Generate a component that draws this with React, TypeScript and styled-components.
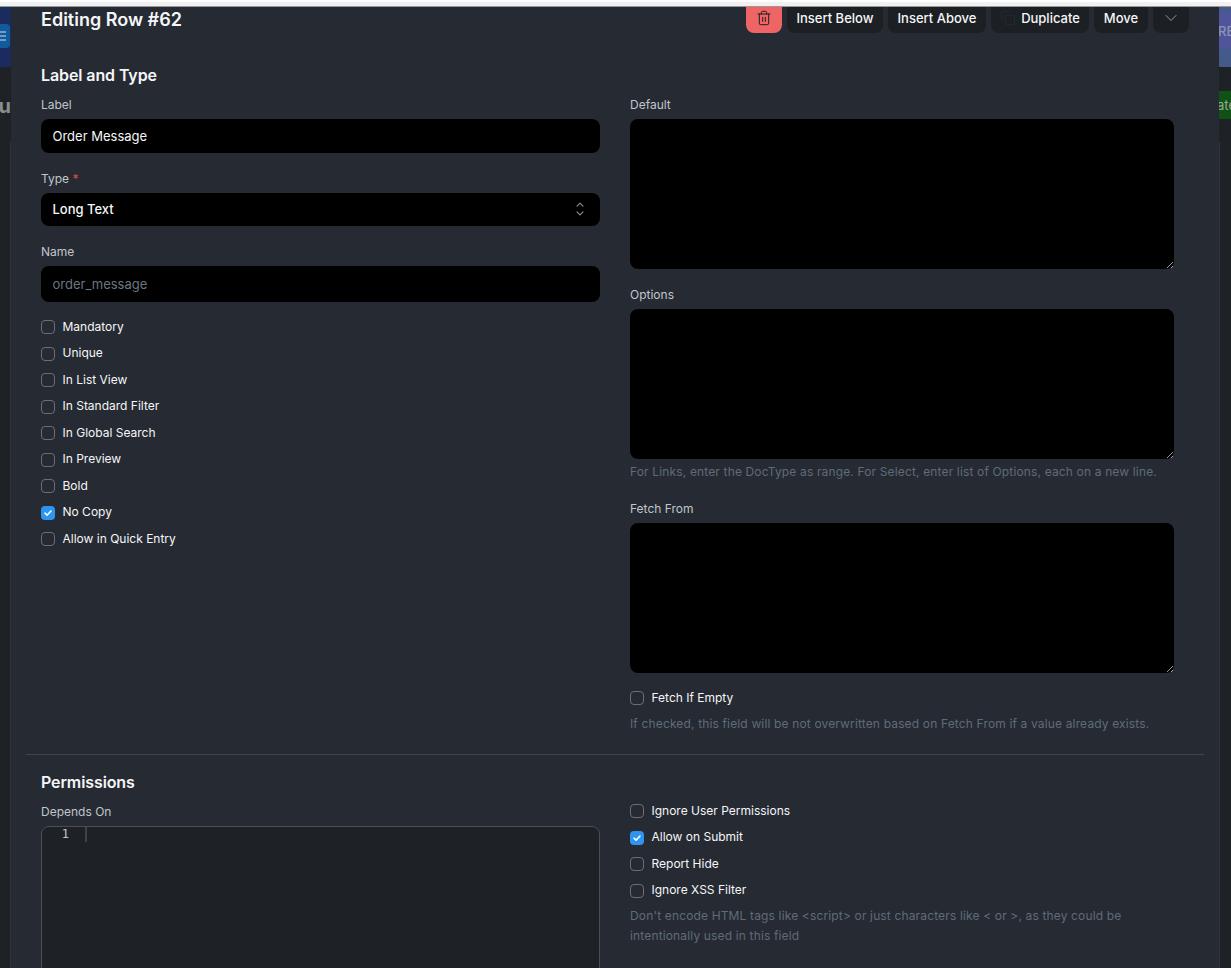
import styled, { createGlobalStyle } from 'styled-components';
import { Copy, ChevronDown, Trash2 } from 'lucide-react';

const GlobalStyle = createGlobalStyle`
  html, body {
    margin: 0;
    background: #1e2226;
  }
  * {
    box-sizing: border-box;
  }
`;

const leftChecks = [
  { label: 'Mandatory' },
  { label: 'Unique' },
  { label: 'In List View' },
  { label: 'In Standard Filter' },
  { label: 'In Global Search' },
  { label: 'In Preview' },
  { label: 'Bold' },
  { label: 'No Copy', checked: true },
  { label: 'Allow in Quick Entry' },
];

const rightChecks = [
  { label: 'Ignore User Permissions' },
  { label: 'Allow on Submit', checked: true },
  { label: 'Report Hide' },
  { label: 'Ignore XSS Filter' },
];

const CheckRow = ({ label, checked }: { label: string; checked?: boolean }) => (
  <Row>
    <Box $checked={checked}>
      {checked && (
        <svg width="10" height="10" viewBox="0 0 10 10" fill="none">
          <path d="M2 5.2 4.1 7.2 8 3" stroke="#fff" strokeWidth="1.6" strokeLinecap="round" strokeLinejoin="round" />
        </svg>
      )}
    </Box>
    <RowLabel>{label}</RowLabel>
  </Row>
);

const App = () => {
  return (
    <Page>
      <GlobalStyle />
      <TopStrip />
      <Stage>
        <LeftSliver>
          <LeftNav>
            <MenuButton>
              <svg width="10" height="12" viewBox="0 0 10 12" fill="none">
                <path d="M0 2h6M0 6h6M0 10h6" stroke="#8fb4d6" strokeWidth="1.6" />
              </svg>
            </MenuButton>
          </LeftNav>
          <LeftTitle>u</LeftTitle>
          <EdgeLine $side="right" />
        </LeftSliver>

        <Modal>
          <Header>
            <Title>Editing Row #62</Title>
            <Actions>
              <DangerButton>
                <Trash2 size={16} strokeWidth={1.5} color="#1c2024" />
              </DangerButton>
              <ActionButton $width={96}>Insert Below</ActionButton>
              <ActionButton $width={98}>Insert Above</ActionButton>
              <ActionButton $width={98}>
                <Copy size={16} strokeWidth={1.5} color="#1f2c34" />
                Duplicate
              </ActionButton>
              <ActionButton $width={54}>Move</ActionButton>
              <ActionButton $width={36}>
                <ChevronDown size={20} strokeWidth={1.1} color="#a0a5ab" />
              </ActionButton>
            </Actions>
          </Header>

          <Section>
            <Column>
              <Heading>Label and Type</Heading>
              <Field>
                <Label>Label</Label>
                <TextInput $height={34} value="Order Message" readOnly />
              </Field>
              <Field>
                <Label>
                  Type <Required>*</Required>
                </Label>
                <SelectBox>
                  Long Text
                  <Stepper width="10" height="16" viewBox="0 0 10 16" fill="none">
                    <path d="M2 5.2 5 2.2l3 3M2 10.8l3 3 3-3" stroke="#8a9097" strokeWidth="1.1" strokeLinecap="round" strokeLinejoin="round" />
                  </Stepper>
                </SelectBox>
              </Field>
              <Field>
                <Label>Name</Label>
                <TextInput $height={36} $muted value="order_message" readOnly />
              </Field>
              <Checks $top={-5}>
                {leftChecks.map((c) => (
                  <CheckRow key={c.label} {...c} />
                ))}
              </Checks>
            </Column>

            <Column $top={31}>
              <Field>
                <Label>Default</Label>
                <Area readOnly />
              </Field>
              <Field $bottom={20}>
                <Label>Options</Label>
                <Area readOnly />
                <Help>For Links, enter the DocType as range. For Select, enter list of Options, each on a new line.</Help>
              </Field>
              <Field>
                <Label>Fetch From</Label>
                <Area readOnly />
              </Field>
              <Checks $top={-5}>
                <CheckRow label="Fetch If Empty" />
              </Checks>
              <Help $top={4}>If checked, this field will be not overwritten based on Fetch From if a value already exists.</Help>
            </Column>
          </Section>

          <Divider />

          <Section $top={17}>
            <Column>
              <Heading>Permissions</Heading>
              <Field>
                <Label>Depends On</Label>
                <Editor>
                  <Gutter>
                    <LineNumber>1</LineNumber>
                  </Gutter>
                  <Caret />
                </Editor>
              </Field>
            </Column>
            <Column $top={26.5}>
              <Checks>
                {rightChecks.map((c) => (
                  <CheckRow key={c.label} {...c} />
                ))}
              </Checks>
              <Help $top={1.5} $lineHeight={20}>
                Don't encode HTML tags like &lt;script&gt; or just characters like &lt; or &gt;, as they could be
                intentionally used in this field
              </Help>
            </Column>
          </Section>
        </Modal>

        <RightSliver>
          <RightNav>
            <NavBand>RE</NavBand>
          </RightNav>
          <GreenBadge>ate</GreenBadge>
          <EdgeLine $side="left" />
        </RightSliver>
      </Stage>
    </Page>
  );
};

export default App;

const Page = styled.div`
  display: flex;
  flex-direction: column;
  width: 1231px;
  height: 968px;
  overflow: hidden;
  font-family: Inter, 'Liberation Sans', sans-serif;
  color: #f5f6f7;
`;

const TopStrip = styled.div`
  height: 7px;
  flex: none;
  background: #f1f1f1;
  border-top: 2px solid #fff;
  border-bottom: 1px solid #9a9a9a;
`;

const Stage = styled.div`
  display: flex;
  flex: 1;
  min-height: 0;
`;

const LeftSliver = styled.div`
  position: relative;
  width: 11px;
  flex: none;
  overflow: hidden;
  background: #1e2226;
`;

const LeftNav = styled.div`
  display: flex;
  align-items: center;
  height: 60px;
  background: #1c2b5e;
`;

const MenuButton = styled.div`
  display: flex;
  align-items: center;
  width: 10px;
  height: 24px;
  margin-top: -2px;
  background: #115a9c;
  border-radius: 0 4px 4px 0;
`;

const LeftTitle = styled.div`
  display: flex;
  justify-content: flex-end;
  margin-top: 27px;
  font-size: 20px;
  font-weight: 700;
  line-height: 24px;
  color: #8a8d91;
`;

const EdgeLine = styled.div<{ $side: 'left' | 'right' }>`
  position: absolute;
  top: 135px;
  bottom: 0;
  ${(p) => p.$side}: 0;
  width: 1px;
  background: #30343a;
`;

const RightSliver = styled.div`
  position: relative;
  width: 12px;
  flex: none;
  overflow: hidden;
  background: #1e2226;
`;

const RightNav = styled.div`
  display: flex;
  align-items: center;
  height: 60px;
  background: #445a8a;
`;

const NavBand = styled.div`
  display: flex;
  align-items: center;
  width: 100%;
  height: 36px;
  margin-top: -12px;
  text-indent: -1px;
  background: #50549a;
  font-size: 13px;
  font-weight: 500;
  color: #8f93b5;
  white-space: nowrap;
`;

const GreenBadge = styled.div`
  height: 28px;
  margin-top: 24px;
  text-indent: -2px;
  background: #0f5214;
  font-size: 13px;
  line-height: 28px;
  color: #9aa59a;
  white-space: nowrap;
`;

const Modal = styled.div`
  flex: 1;
  min-width: 0;
  background: #262a32;
`;

const Header = styled.div`
  display: flex;
  align-items: center;
  justify-content: space-between;
  height: 26px;
  padding: 0 30px;
`;

const Title = styled.h1`
  margin: 0;
  font-size: 18px;
  font-weight: 600;
  line-height: 26px;
`;

const Actions = styled.div`
  display: flex;
  gap: 5px;
`;

const ActionButton = styled.div<{ $width: number }>`
  display: flex;
  align-items: center;
  justify-content: center;
  gap: 5px;
  width: ${(p) => p.$width}px;
  height: 26px;
  padding-bottom: 4px;
  background: #1c2024;
  border-radius: 0 0 8px 8px;
  font-size: 13px;
  font-weight: 500;
`;

const DangerButton = styled(ActionButton).attrs({ $width: 36 })`
  background: #ef6464;
`;

const Section = styled.div<{ $top?: number }>`
  display: grid;
  grid-template-columns: 559px 544px;
  column-gap: 30px;
  padding: ${(p) => p.$top ?? 32}px 0 0 30px;
`;

const Column = styled.div<{ $top?: number }>`
  display: flex;
  flex-direction: column;
  padding-top: ${(p) => p.$top ?? 0}px;
`;

const Heading = styled.h2`
  margin: 0 0 11px;
  font-size: 16px;
  font-weight: 600;
  line-height: 20px;
  letter-spacing: -0.1px;
`;

const Field = styled.div<{ $bottom?: number }>`
  display: flex;
  flex-direction: column;
  margin-bottom: ${(p) => p.$bottom ?? 17}px;
`;

const Label = styled.label`
  padding-top: 1px;
  margin-bottom: 6px;
  font-size: 12px;
  line-height: 16px;
  color: #c0c6cc;
`;

const Required = styled.span`
  color: #e24c4c;
`;

const TextInput = styled.input<{ $height: number; $muted?: boolean }>`
  width: 100%;
  height: ${(p) => p.$height}px;
  padding: 0 12px 1px 11.5px;
  border: 0;
  outline: 0;
  border-radius: 8px;
  background: #000;
  font-family: inherit;
  font-size: 13px;
  font-weight: 400;
  color: ${(p) => (p.$muted ? '#6c7680' : '#f5f6f7')};
`;

const SelectBox = styled.div`
  display: flex;
  align-items: center;
  justify-content: space-between;
  height: 33px;
  padding: 0 15px 1px 11.5px;
  border-radius: 8px;
  background: #000;
  font-size: 13px;
  font-weight: 500;
`;

const Stepper = styled.svg`
  flex: none;
`;

const Area = styled.textarea`
  display: block;
  width: 100%;
  height: 150px;
  padding: 8px 12px;
  border: 0;
  outline: 0;
  border-radius: 8px;
  background: #000;
  color-scheme: dark;
`;

const Help = styled.div<{ $top?: number; $lineHeight?: number }>`
  margin-top: ${(p) => p.$top ?? 5}px;
  font-size: 12px;
  line-height: ${(p) => p.$lineHeight ?? 16}px;
  letter-spacing: 0.15px;
  color: #5f6c78;
`;

const Checks = styled.div<{ $top?: number }>`
  display: flex;
  flex-direction: column;
  margin-top: ${(p) => p.$top ?? 0}px;
`;

const Row = styled.div`
  display: flex;
  align-items: center;
  gap: 7.5px;
  height: 26.5px;
  font-size: 12px;
  font-weight: 400;
`;

const RowLabel = styled.span`
  margin-bottom: 2px;
`;

const Box = styled.span<{ $checked?: boolean }>`
  display: flex;
  align-items: center;
  justify-content: center;
  width: 14px;
  height: 14px;
  flex: none;
  border-radius: 4px;
  border: ${(p) => (p.$checked ? '0' : '1px solid #6b6f75')};
  background: ${(p) => (p.$checked ? '#2d95f0' : 'transparent')};
`;

const Divider = styled.div`
  height: 1px;
  margin: 22px 15px 0;
  background: #41454b;
`;

const Editor = styled.div`
  display: flex;
  height: 400px;
  border: 1px solid #4a4d52;
  border-radius: 8px;
  background: #1e2226;
`;

const Gutter = styled.div`
  display: flex;
  justify-content: flex-end;
  width: 27px;
`;

const LineNumber = styled.span`
  font-family: 'DejaVu Sans Mono', monospace;
  font-size: 12px;
  line-height: 15px;
  color: #c0c6cc;
`;

const Caret = styled.div`
  width: 2px;
  height: 15px;
  margin-left: 16px;
  background: #3f4349;
`;
